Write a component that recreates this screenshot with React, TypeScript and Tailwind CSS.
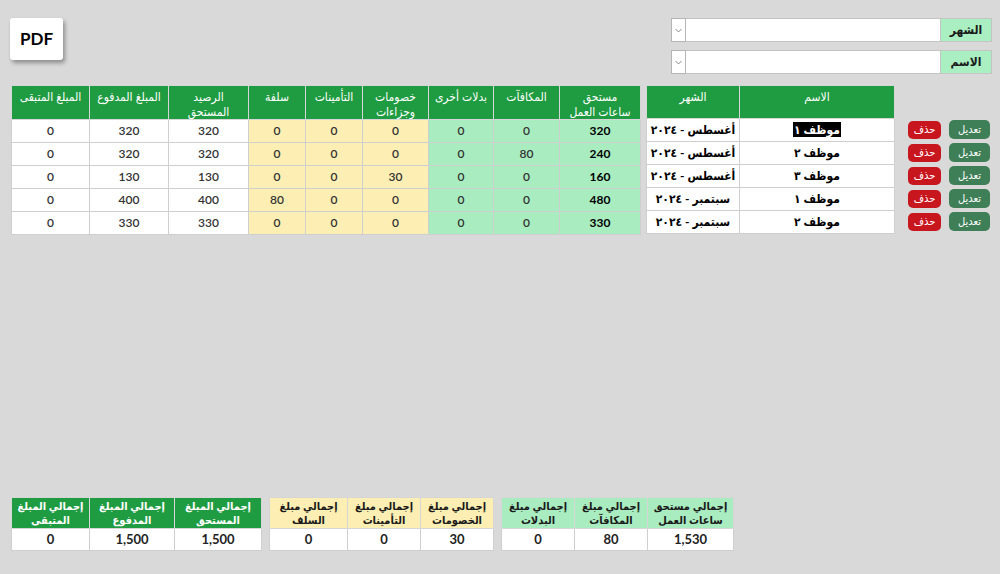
import React from 'react';

type Row = {
  name: string;
  month: string;
  hours: number;
  bonus: number;
  allow: number;
  ded: number;
  ins: number;
  adv: number;
  due: number;
  paid: number;
  rem: number;
};

const rows: Row[] = [
  { name: 'موظف ١', month: 'أغسطس - ٢٠٢٤', hours: 320, bonus: 0, allow: 0, ded: 0, ins: 0, adv: 0, due: 320, paid: 320, rem: 0 },
  { name: 'موظف ٢', month: 'أغسطس - ٢٠٢٤', hours: 240, bonus: 80, allow: 0, ded: 0, ins: 0, adv: 0, due: 320, paid: 320, rem: 0 },
  { name: 'موظف ٣', month: 'أغسطس - ٢٠٢٤', hours: 160, bonus: 0, allow: 0, ded: 30, ins: 0, adv: 0, due: 130, paid: 130, rem: 0 },
  { name: 'موظف ١', month: 'سبتمبر - ٢٠٢٤', hours: 480, bonus: 0, allow: 0, ded: 0, ins: 0, adv: 80, due: 400, paid: 400, rem: 0 },
  { name: 'موظف ٢', month: 'سبتمبر - ٢٠٢٤', hours: 330, bonus: 0, allow: 0, ded: 0, ins: 0, adv: 0, due: 330, paid: 330, rem: 0 },
];

const FONT = "font-['Lato','DejaVu_Sans_Condensed','DejaVu_Sans',sans-serif]";

const FilterRow: React.FC<{ label: string }> = ({ label }) => (
  <div className="flex h-[24px]">
    <div className="flex w-[15px] items-center justify-center border border-[#b5b5b5] bg-white">
      <svg width="7" height="5" viewBox="0 0 7 5" fill="none" stroke="#8a8a8a" strokeWidth="1">
        <polyline points="0.5,1 3.5,4 6.5,1" />
      </svg>
    </div>
    <div className="w-[254px] border-y border-[#c4c4c4] bg-white" />
    <div className="flex w-[52px] items-center justify-center border border-[#c4c4c4] bg-[#a9efc1] text-[12px] font-bold text-[#1a1a1a]">
      {label}
    </div>
  </div>
);

const th = 'border border-[#d6d6d6] bg-[#1f9b41] px-0 pt-[3px] align-top whitespace-nowrap text-[12px] font-normal leading-[15px] text-white';
const td = 'h-[23px] border border-[#cfcfcf] text-center whitespace-nowrap text-[12px] leading-none';

const MainTable: React.FC = () => (
  <table dir="rtl" className="w-[629px] table-fixed border-collapse">
    <thead>
      <tr className="h-[33px]">
        <th className={`${th} w-[81px]`}>مستحق<br />ساعات العمل</th>
        <th className={`${th} w-[66px]`}>المكافآت</th>
        <th className={`${th} w-[65px]`}>بدلات أخرى</th>
        <th className={`${th} w-[66px]`}>خصومات<br />وجزاءات</th>
        <th className={`${th} w-[57px]`}>التأمينات</th>
        <th className={`${th} w-[57px]`}>سلفة</th>
        <th className={`${th} w-[80px]`}>الرصيد<br />المستحق</th>
        <th className={`${th} w-[79px]`}>المبلغ المدفوع</th>
        <th className={`${th} w-[78px]`}>المبلغ المتبقى</th>
      </tr>
    </thead>
    <tbody>
      {rows.map((r, i) => (
        <tr key={i}>
          <td className={`${td} bg-[#a9ecc0] font-bold text-black`}>{r.hours}</td>
          <td className={`${td} bg-[#a9ecc0] font-semibold text-[#333]`}>{r.bonus}</td>
          <td className={`${td} bg-[#a9ecc0] font-semibold text-[#333]`}>{r.allow}</td>
          <td className={`${td} bg-[#fdefb3] font-semibold text-[#333]`}>{r.ded}</td>
          <td className={`${td} bg-[#fdefb3] font-semibold text-[#333]`}>{r.ins}</td>
          <td className={`${td} bg-[#fdefb3] font-semibold text-[#333]`}>{r.adv}</td>
          <td className={`${td} bg-white font-semibold text-[#333]`}>{r.due}</td>
          <td className={`${td} bg-white font-semibold text-[#333]`}>{r.paid}</td>
          <td className={`${td} bg-white font-semibold text-[#333]`}>{r.rem}</td>
        </tr>
      ))}
    </tbody>
  </table>
);

const NameTable: React.FC = () => (
  <table dir="rtl" className="w-[248px] table-fixed border-collapse">
    <thead>
      <tr className="h-[33px]">
        <th className={`${th} w-[155px]`}>الاسم</th>
        <th className={`${th} w-[93px]`}>الشهر</th>
      </tr>
    </thead>
    <tbody>
      {rows.map((r, i) => (
        <tr key={i}>
          <td className={`${td} bg-white font-bold text-black`}>
            {i === 0 ? <span className="bg-black px-[1px] text-white">{r.name}</span> : r.name}
          </td>
          <td className={`${td} bg-white font-bold text-black`}>{r.month}</td>
        </tr>
      ))}
    </tbody>
  </table>
);

const RowActions: React.FC = () => (
  <div className="mt-[33px] flex flex-col">
    {rows.map((_, i) => (
      <div key={i} className="flex h-[23px] items-center gap-[8px]">
        <button className="flex h-[18px] w-[33px] items-center justify-center rounded-[5px] bg-[#c8161f] text-[11px] text-white">حذف</button>
        <button className="flex h-[19px] w-[41px] items-center justify-center rounded-[5px] bg-[#3f7f58] text-[11px] text-white">تعديل</button>
      </div>
    ))}
  </div>
);

type SummaryCell = { label: [string, string]; value: string; width: string };

const SummaryGroup: React.FC<{ cells: SummaryCell[]; headClass: string }> = ({ cells, headClass }) => (
  <table dir="rtl" className="table-fixed border-collapse">
    <thead>
      <tr className="h-[31px]">
        {cells.map((c, i) => (
          <th key={i} className={`${c.width} border border-[#d6d6d6] px-0 pt-[1px] align-top whitespace-nowrap text-[11px] font-bold leading-[14px] ${headClass}`}>
            {c.label[0]}
            <br />
            {c.label[1]}
          </th>
        ))}
      </tr>
    </thead>
    <tbody>
      <tr>
        {cells.map((c, i) => (
          <td key={i} className="h-[22px] border border-[#cfcfcf] bg-white text-center text-[13px] font-bold text-[#222]">
            {c.value}
          </td>
        ))}
      </tr>
    </tbody>
  </table>
);

const App: React.FC = () => (
  <div className={`${FONT} flex h-[574px] w-[1000px] flex-col overflow-hidden bg-[#d9d9d9]`}>
    <div className="flex items-start justify-between pl-[10px] pr-[8px] pt-[18px]">
      <button className="flex h-[42px] w-[53px] items-center justify-center rounded-[3px] bg-white text-[17px] font-bold text-black shadow-[2px_3px_4px_rgba(0,0,0,0.35)]">
        PDF
      </button>
      <div className="flex flex-col gap-[8px]">
        <FilterRow label="الشهر" />
        <FilterRow label="الاسم" />
      </div>
    </div>

    <div className="mt-[11px] flex items-start pl-[11px]">
      <MainTable />
      <div className="ml-[5px]">
        <NameTable />
      </div>
      <div className="ml-[13px]">
        <RowActions />
      </div>
    </div>

    <div className="mt-auto mb-[23px] flex items-start gap-[7px] pl-[11px]">
      <SummaryGroup
        headClass="bg-[#1f9b41] text-white"
        cells={[
          { label: ['إجمالي المبلغ', 'المستحق'], value: '1,500', width: 'w-[87px]' },
          { label: ['إجمالي المبلغ', 'المدفوع'], value: '1,500', width: 'w-[85px]' },
          { label: ['إجمالي المبلغ', 'المتبقى'], value: '0', width: 'w-[78px]' },
        ]}
      />
      <SummaryGroup
        headClass="bg-[#fdefb3] text-[#1a1a1a]"
        cells={[
          { label: ['إجمالي مبلغ', 'الخصومات'], value: '30', width: 'w-[73px]' },
          { label: ['إجمالي مبلغ', 'التأمينات'], value: '0', width: 'w-[73px]' },
          { label: ['إجمالي مبلغ', 'السلف'], value: '0', width: 'w-[78px]' },
        ]}
      />
      <SummaryGroup
        headClass="bg-[#a9ecc0] text-[#1a1a1a]"
        cells={[
          { label: ['إجمالي مستحق', 'ساعات العمل'], value: '1,530', width: 'w-[86px]' },
          { label: ['إجمالي مبلغ', 'المكافآت'], value: '80', width: 'w-[73px]' },
          { label: ['إجمالي مبلغ', 'البدلات'], value: '0', width: 'w-[73px]' },
        ]}
      />
    </div>
  </div>
);

export default App;
